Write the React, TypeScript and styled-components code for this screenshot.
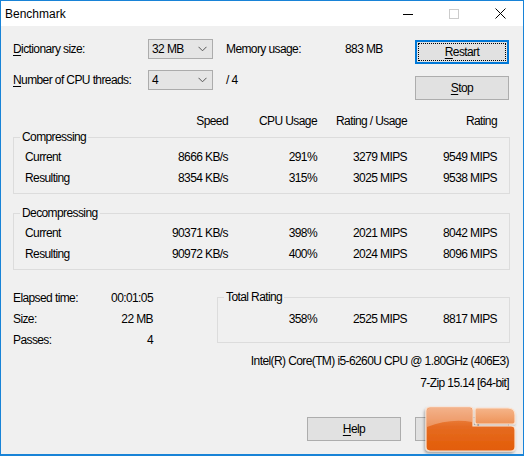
import React from 'react';
import styled, { createGlobalStyle } from 'styled-components';

const GlobalStyle = createGlobalStyle`
  html, body {
    margin: 0;
    padding: 0;
    background: #ffffff;
  }
  body {
    font-family: "Liberation Sans", Arial, sans-serif;
  }
`;

const COLS = '100px 103px 89px 90px 90px';

const Window = styled.div`
  position: relative;
  width: 524px;
  height: 456px;
  box-sizing: border-box;
  border: 1px solid #1883d7;
  border-bottom-width: 2px;
  background: #f0f0f0;
  display: flex;
  flex-direction: column;
  overflow: hidden;
  color: #000;
  font-size: 12px;
  letter-spacing: -0.6px;
`;

const TitleBar = styled.div`
  height: 25px;
  background: #ffffff;
  display: flex;
  align-items: center;
`;

const TitleText = styled.div`
  flex: 1;
  padding-left: 4px;
  font-size: 12px;
  letter-spacing: 0;
`;

const CaptionButton = styled.div`
  width: 46px;
  height: 25px;
  display: flex;
  align-items: center;
  justify-content: center;
`;

const Body = styled.div`
  flex: 1;
  display: flex;
  flex-direction: column;
  padding: 13px 13px 0 12px;
`;

const TopArea = styled.div`
  display: flex;
  align-items: flex-start;
`;

const Settings = styled.div`
  display: grid;
  grid-template-columns: 122px 65px 106px auto;
  grid-auto-rows: 20px;
  column-gap: 13px;
  row-gap: 11px;
  align-items: center;
`;

const Label = styled.span`
  white-space: nowrap;
`;

const Key = styled.span`
  text-decoration: underline;
  text-underline-offset: 2px;
`;

const Combo = styled.div`
  box-sizing: border-box;
  height: 20px;
  border: 1px solid #acacac;
  background: #e5e5e5;
  display: flex;
  align-items: center;
  justify-content: space-between;
  padding: 0 5px 0 3px;
`;

const ButtonColumn = styled.div`
  margin-left: auto;
  margin-right: 1px;
  margin-top: 1px;
  display: flex;
  flex-direction: column;
  gap: 12px;
`;

const Button = styled.button<{ $focused?: boolean }>`
  box-sizing: border-box;
  width: 94px;
  height: 24px;
  padding: 0;
  font-family: inherit;
  font-size: 12px;
  letter-spacing: -0.6px;
  color: #000;
  background: #e1e1e1;
  border: ${p => (p.$focused ? '2px solid #0078d7' : '1px solid #adadad')};
  outline: ${p => (p.$focused ? '1px dotted #000' : 'none')};
  outline-offset: -4px;
`;

const HeaderRow = styled.div`
  margin-top: 14px;
  padding-left: 12px;
  display: grid;
  grid-template-columns: ${COLS};
  line-height: 14px;
`;

const Cell = styled.div<{ $right?: boolean }>`
  white-space: nowrap;
  text-align: ${p => (p.$right ? 'right' : 'left')};
`;

const Group = styled.fieldset<{ $gap?: number }>`
  margin: ${p => p.$gap ?? 0}px 0 0 0;
  padding: 3px 12px 4px 11px;
  border: 1px solid #dcdcdc;
  min-width: 0;
`;

const Legend = styled.legend`
  padding: 0 2px;
  margin-left: -5px;
  line-height: 14px;
`;

const GroupGrid = styled.div<{ $cols: string }>`
  display: grid;
  grid-template-columns: ${p => p.$cols};
  grid-auto-rows: 21px;
  line-height: 21px;
`;

const BottomArea = styled.div`
  margin-top: 18px;
  display: flex;
  align-items: flex-start;
`;

const Stats = styled.div`
  display: grid;
  grid-template-columns: 80px 60px;
  grid-auto-rows: 21px;
  line-height: 21px;
`;

const TotalGroup = styled(Group)`
  flex: 1;
  margin: 2px 0 0 64px;
  padding: 5px 12px 12px 11px;
`;

const InfoLine = styled.div<{ $gap: number }>`
  margin-top: ${p => p.$gap}px;
  margin-right: 1px;
  text-align: right;
  line-height: 14px;
`;

const DialogButtons = styled.div`
  margin-top: 27px;
  margin-right: 1px;
  display: flex;
  justify-content: flex-end;
  gap: 14px;
`;

const Watermark = styled.svg`
  position: absolute;
  left: 419px;
  top: 402px;
`;

const Chevron = () => (
  <svg width="9" height="6" viewBox="0 0 9 6">
    <path d="M0.5 0.8 L4.5 4.8 L8.5 0.8" fill="none" stroke="#555" strokeWidth="1" />
  </svg>
);

const compressing = [
  ['Current', '8666 KB/s', '291%', '3279 MIPS', '9549 MIPS'],
  ['Resulting', '8354 KB/s', '315%', '3025 MIPS', '9538 MIPS'],
];

const decompressing = [
  ['Current', '90371 KB/s', '398%', '2021 MIPS', '8042 MIPS'],
  ['Resulting', '90972 KB/s', '400%', '2024 MIPS', '8096 MIPS'],
];

const Rows: React.FC<{ rows: string[][] }> = ({ rows }) => (
  <GroupGrid $cols={COLS}>
    {rows.map(r =>
      r.map((v, i) => (
        <Cell key={r[0] + i} $right={i > 0}>
          {v}
        </Cell>
      ))
    )}
  </GroupGrid>
);

const App: React.FC = () => {
  return (
    <>
      <GlobalStyle />
      <Window>
        <TitleBar>
          <TitleText>Benchmark</TitleText>
          <CaptionButton>
            <svg width="10" height="10" viewBox="0 0 10 10">
              <line x1="0" y1="5.5" x2="10" y2="5.5" stroke="#000" strokeWidth="1" />
            </svg>
          </CaptionButton>
          <CaptionButton>
            <svg width="10" height="10" viewBox="0 0 10 10">
              <rect x="0.5" y="0.5" width="9" height="9" fill="none" stroke="#cccccc" strokeWidth="1" />
            </svg>
          </CaptionButton>
          <CaptionButton>
            <svg width="11" height="11" viewBox="0 0 11 11">
              <path d="M0.5 0.5 L10.5 10.5 M10.5 0.5 L0.5 10.5" stroke="#000" strokeWidth="1" />
            </svg>
          </CaptionButton>
        </TitleBar>

        <Body>
          <TopArea>
            <Settings>
              <Label>
                <Key>D</Key>ictionary size:
              </Label>
              <Combo>
                <span>32 MB</span>
                <Chevron />
              </Combo>
              <Label>Memory usage:</Label>
              <Label>883 MB</Label>
              <Label>
                <Key>N</Key>umber of CPU threads:
              </Label>
              <Combo>
                <span>4</span>
                <Chevron />
              </Combo>
              <Label>/ 4</Label>
              <span />
            </Settings>
            <ButtonColumn>
              <Button $focused>
                <Key>R</Key>estart
              </Button>
              <Button>
                <Key>S</Key>top
              </Button>
            </ButtonColumn>
          </TopArea>

          <HeaderRow>
            <Cell />
            <Cell $right>Speed</Cell>
            <Cell $right>CPU Usage</Cell>
            <Cell $right>Rating / Usage</Cell>
            <Cell $right>Rating</Cell>
          </HeaderRow>

          <Group $gap={2}>
            <Legend>Compressing</Legend>
            <Rows rows={compressing} />
          </Group>

          <Group $gap={12}>
            <Legend>Decompressing</Legend>
            <Rows rows={decompressing} />
          </Group>

          <BottomArea>
            <Stats>
              <Cell>Elapsed time:</Cell>
              <Cell $right>00:01:05</Cell>
              <Cell>Size:</Cell>
              <Cell $right>22 MB</Cell>
              <Cell>Passes:</Cell>
              <Cell $right>4</Cell>
            </Stats>
            <TotalGroup>
              <Legend>Total Rating</Legend>
              <GroupGrid $cols="88px 90px 90px">
                <Cell $right>358%</Cell>
                <Cell $right>2525 MIPS</Cell>
                <Cell $right>8817 MIPS</Cell>
              </GroupGrid>
            </TotalGroup>
          </BottomArea>

          <InfoLine $gap={3}>Intel(R) Core(TM) i5-6260U CPU @ 1.80GHz (406E3)</InfoLine>
          <InfoLine $gap={8}>7-Zip 15.14 [64-bit]</InfoLine>

          <DialogButtons>
            <Button>
              <Key>H</Key>elp
            </Button>
            <Button>Cancel</Button>
          </DialogButtons>
        </Body>

        <Watermark width="98" height="54" viewBox="0 0 98 54">
          <defs>
            <linearGradient id="lrMain" x1="0" y1="0" x2="0" y2="1">
              <stop offset="0" stopColor="#ef9660" />
              <stop offset="0.45" stopColor="#e56b22" />
              <stop offset="1" stopColor="#e35c06" />
            </linearGradient>
            <linearGradient id="lrTab" x1="0" y1="0" x2="0" y2="1">
              <stop offset="0" stopColor="#f5b58a" />
              <stop offset="1" stopColor="#ee9358" />
            </linearGradient>
            <filter id="lrShadow" x="-20%" y="-20%" width="140%" height="150%">
              <feDropShadow dx="-1" dy="2" stdDeviation="1.6" floodColor="#000" floodOpacity="0.35" />
            </filter>
          </defs>
          <g filter="url(#lrShadow)">
            <path
              d="M10 4 H50 Q53 4 53 7 V23 H91 Q95 23 95 27 V44 Q95 48 91 48 H10 Q6 48 6 44 V8 Q6 4 10 4 Z"
              fill="url(#lrMain)"
              stroke="#fbe2cf"
              strokeWidth="1.2"
            />
            <path
              d="M57 5 H88 Q95 5 95 12 V19 Q95 21 93 21 H57 Q55 21 55 19 V7 Q55 5 57 5 Z"
              fill="url(#lrTab)"
              stroke="#fbe2cf"
              strokeWidth="1.2"
            />
          </g>
          <path d="M10 5 H50 Q52 5 52 7 V19 Q30 15 7 24 V8 Q7 5 10 5 Z" fill="#ffffff" opacity="0.28" />
        </Watermark>
      </Window>
    </>
  );
};

export default App;
